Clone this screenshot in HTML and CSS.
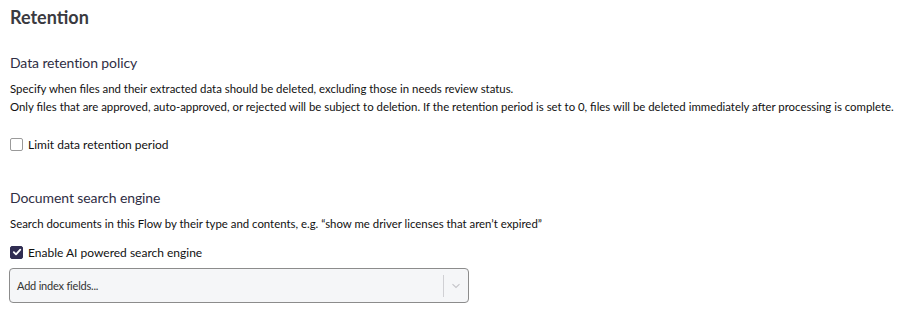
FILE: index.html
```html
<!DOCTYPE html>
<html>
<head>
<meta charset="utf-8">
<link rel="stylesheet" href="styles.css">
</head>
<body>
<div class="page">
  <h1 class="title">Retention</h1>
  <section class="section first">
    <h2 class="subtitle">Data retention policy</h2>
    <p class="desc">Specify when files and their extracted data should be deleted, excluding those in needs review status.</p>
    <p class="desc">Only files that are approved, auto-approved, or rejected will be subject to deletion. If the retention period is set to 0, files will be deleted immediately after processing is complete.</p>
    <label class="check">
      <span class="box"></span>
      <span class="label">Limit data retention period</span>
    </label>
  </section>
  <section class="section second">
    <h2 class="subtitle">Document search engine</h2>
    <p class="desc">Search documents in this Flow by their type and contents, e.g. “show me driver licenses that aren’t expired”</p>
    <label class="check">
      <span class="box checked">
        <svg width="10" height="10" viewBox="0 0 10 10"><path d="M1.8 5.2 L4 7.4 L8.3 2.6" fill="none" stroke="#fff" stroke-width="1.8" stroke-linecap="round" stroke-linejoin="round"/></svg>
      </span>
      <span class="label">Enable AI powered search engine</span>
    </label>
    <div class="select">
      <span class="placeholder">Add index fields...</span>
      <span class="sep"></span>
      <span class="chev">
        <svg width="10" height="6" viewBox="0 0 10 6"><path d="M1.5 1.2 L5 4.5 L8.5 1.2" fill="none" stroke="#c4c4c8" stroke-width="1.1"/></svg>
      </span>
    </div>
  </section>
</div>
</body>
</html>
```
FILE: styles.css
```css
* { box-sizing: border-box; }
html, body { margin: 0; padding: 0; background: #fff; }
body {
  font-family: "Lato", "Liberation Sans", sans-serif;
  color: #1c1b24;
}
.page { padding: 6px 10px 0 10px; }
.title {
  margin: 0;
  font-size: 18px;
  font-weight: 700;
  color: #3a3a40;
  line-height: 22px;
}
.section.first { margin-top: 25px; }
.section.second { margin-top: 35px; }
.subtitle {
  margin: 0 0 7px 0;
  font-size: 14px;
  letter-spacing: -0.1px;
  font-weight: 400;
  color: #2f2e44;
  line-height: 20px;
}
.desc {
  margin: 0;
  font-size: 11.4px;
  line-height: 18px;
  color: #111;
  white-space: nowrap;
}
.check {
  display: flex;
  align-items: center;
  gap: 5px;
  margin-top: 19px;
  height: 18px;
}
.second .check { margin-top: 10px; }
.box {
  width: 13px;
  height: 13px;
  border: 1px solid #9a9a9a;
  border-radius: 2px;
  display: flex;
  align-items: center;
  justify-content: center;
  background: #fff;
}
.box.checked { background: #302d52; border-color: #302d52; }
.label { font-size: 12px; color: #111; }
.select {
  margin-top: 7px;
  width: 460px;
  height: 35px;
  margin-left: -1px;
  border: 1px solid #8c8c8c;
  border-radius: 4px;
  background: #f5f6f8;
  display: flex;
  align-items: center;
  padding-left: 7px;
}
.placeholder { flex: 1; font-size: 11px; letter-spacing: -0.2px; color: #333; }
.sep { width: 1px; height: 22px; background: #d0d0d4; }
.chev { width: 24px; display: flex; justify-content: center; }
```
